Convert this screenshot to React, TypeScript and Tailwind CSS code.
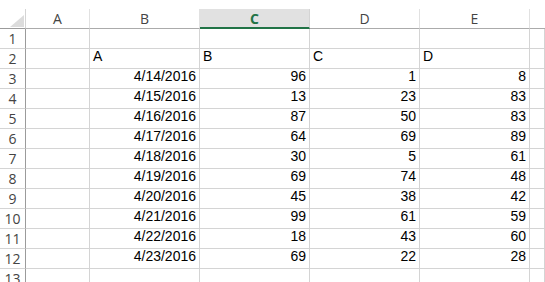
const rows: [string, number, number, number][] = [
  ["4/14/2016", 96, 1, 8],
  ["4/15/2016", 13, 23, 83],
  ["4/16/2016", 87, 50, 83],
  ["4/17/2016", 64, 69, 89],
  ["4/18/2016", 30, 5, 61],
  ["4/19/2016", 69, 74, 48],
  ["4/20/2016", 45, 38, 42],
  ["4/21/2016", 99, 61, 59],
  ["4/22/2016", 18, 43, 60],
  ["4/23/2016", 69, 22, 28],
];

const cell = "h-full border-r border-b border-[#d4d4d4] px-[3px] flex items-end pb-[1px] text-[14px] text-black overflow-hidden";
const rowHead = "h-full w-[26px] shrink-0 border-r border-b border-r-[#9b9b9b] border-b-[#d4d4d4] flex items-center justify-center text-[14px] text-[#444]";

function Row({ n, cells }: { n: number; cells: { text: string; right?: boolean }[] }) {
  const widths = ["w-[64px]", "w-[110px]", "w-[110px]", "w-[110px]", "w-[110px]"];
  return (
    <div className="flex h-[20px]">
      <div className={rowHead} style={{ fontFamily: '"Open Sans", sans-serif' }}>{n}</div>
      {widths.map((w, i) => (
        <div key={i} className={`${cell} ${w} shrink-0 ${cells[i]?.right ? "justify-end" : "justify-start"}`}>
          {cells[i]?.text}
        </div>
      ))}
      <div className={`${cell} flex-1`}></div>
    </div>
  );
}

export default function App() {
  return (
    <div className="w-[545px] h-[282px] bg-white overflow-hidden pt-[9px]" style={{ fontFamily: '"Liberation Sans", Arial, sans-serif' }}>
      {/* column headers */}
      <div className="flex h-[20px] text-[14px] text-[#444]" style={{ fontFamily: '"Open Sans", sans-serif' }}>
        <div className="relative w-[26px] shrink-0 h-full border-r border-b border-[#9b9b9b] border-r-[#d4d4d4]">
          <svg className="absolute left-[10px] top-[6px]" width="14" height="12" viewBox="0 0 14 12">
            <polygon points="14,0 14,12 0,12" fill="#dcdcdc" />
          </svg>
        </div>
        <div className="w-[64px] shrink-0 h-full border-r border-b border-r-[#e1e1e1] border-b-[#ababab] flex items-center justify-center">A</div>
        <div className="w-[110px] shrink-0 h-full border-r border-b border-r-[#e1e1e1] border-b-[#ababab] flex items-center justify-center">B</div>
        <div className="w-[110px] shrink-0 h-full border-r border-b-2 border-r-[#d4d4d4] border-b-[#217346] bg-[#e1e1e1] text-[#217346] font-bold flex items-center justify-center">C</div>
        <div className="w-[110px] shrink-0 h-full border-r border-b border-r-[#e1e1e1] border-b-[#ababab] flex items-center justify-center">D</div>
        <div className="w-[110px] shrink-0 h-full border-r border-b border-r-[#e1e1e1] border-b-[#ababab] flex items-center justify-center">E</div>
        <div className="flex-1 h-full border-b border-b-[#ababab]"></div>
      </div>

      <Row n={1} cells={[]} />
      <Row n={2} cells={[{ text: "" }, { text: "A" }, { text: "B" }, { text: "C" }, { text: "D" }]} />
      {rows.map((r, i) => (
        <Row
          key={i}
          n={i + 3}
          cells={[
            { text: "" },
            { text: r[0], right: true },
            { text: String(r[1]), right: true },
            { text: String(r[2]), right: true },
            { text: String(r[3]), right: true },
          ]}
        />
      ))}
      <Row n={13} cells={[]} />
    </div>
  );
}
